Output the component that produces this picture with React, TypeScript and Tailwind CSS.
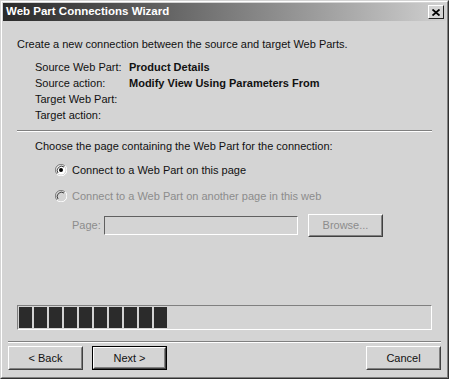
import React from "react";

const font = { fontFamily: '"Liberation Sans", Arial, sans-serif' };

function Radio({ checked, disabled }: { checked?: boolean; disabled?: boolean }) {
  return (
    <svg width="12" height="12" viewBox="0 0 12 12" className="shrink-0">
      <path d="M10 2 A5.5 5.5 0 0 0 2 10" fill="none" stroke="#808080" strokeWidth="1" />
      <path d="M10.2 1.8 A5.5 5.5 0 0 1 1.8 10.2" fill="none" stroke="#ffffff" strokeWidth="1" />
      <circle cx="6" cy="6" r="4.5" fill={disabled ? "#d4d4d4" : "#ffffff"} stroke="none" />
      <path d="M9 3 A4.3 4.3 0 0 0 3 9" fill="none" stroke="#404040" strokeWidth="1" />
      {checked && <circle cx="6" cy="6" r="2" fill="#000" />}
    </svg>
  );
}

function Button({ children, isDefault }: { children: React.ReactNode; isDefault?: boolean }) {
  const inner = (
    <div className="h-full w-full border border-t-white border-l-white border-r-[#404040] border-b-[#404040]">
      <div className="h-full w-full border border-t-[#d4d4d4] border-l-[#d4d4d4] border-r-[#808080] border-b-[#808080] flex items-center justify-center text-[11px] text-[#111]">
        {children}
      </div>
    </div>
  );
  if (isDefault) {
    return <div className="w-[75px] h-[24px] border border-black">{inner}</div>;
  }
  return <div className="w-[75px] h-[24px]">{inner}</div>;
}

export default function App() {
  return (
    <div style={font} className="w-[449px] h-[379px] bg-[#d4d4d4]">
      <div className="w-full h-full border border-t-[#d4d4d4] border-l-[#d4d4d4] border-r-[#303030] border-b-[#303030] flex flex-col">
        <div className="flex-1 border border-t-white border-l-white border-r-[#808080] border-b-[#808080] p-px flex flex-col">
          {/* Title bar */}
          <div className="h-[18px] flex items-center justify-between pl-[3px] pr-[2px] bg-gradient-to-r from-[#2a2a2a] via-[#7a7a7a] to-[#d0d0d0]">
            <span className="text-white font-bold text-[11.5px] leading-none">Web Part Connections Wizard</span>
            <div className="w-[16px] h-[14px] border border-t-white border-l-white border-r-[#202020] border-b-[#202020] bg-[#d4d4d4] flex items-center justify-center">
              <svg width="8" height="7" viewBox="0 0 8 7">
                <path d="M0.5 0.5 L7.5 6.5 M7.5 0.5 L0.5 6.5" stroke="#000" strokeWidth="1.8" />
              </svg>
            </div>
          </div>

          {/* Body */}
          <div className="flex-1 flex flex-col text-[11px] text-[#111]">
            <div className="pl-[14px] mt-[15px] leading-[16px] whitespace-nowrap">Create a new connection between the source and target Web Parts.</div>
            <div className="pl-[32px] mt-[7px] grid grid-cols-[94px_1fr] leading-[16px] whitespace-nowrap">
              <div>Source Web Part:</div>
              <div className="font-bold">Product Details</div>
              <div>Source action:</div>
              <div className="font-bold">Modify View Using Parameters From</div>
              <div>Target Web Part:</div>
              <div></div>
              <div>Target action:</div>
              <div></div>
            </div>
            <div className="ml-[14px] mr-[14px] mt-[7px] border-t border-t-[#808080] border-b border-b-white" />
            <div className="pl-[32px] mt-[6px] leading-[16px] whitespace-nowrap">Choose the page containing the Web Part for the connection:</div>
            <div className="pl-[52px] mt-[8px] flex items-center gap-[5px] leading-[16px] whitespace-nowrap">
              <Radio checked />
              <span>Connect to a Web Part on this page</span>
            </div>
            <div className="pl-[52px] mt-[10px] flex items-center gap-[5px] leading-[16px] text-[#8c8c8c] whitespace-nowrap">
              <Radio disabled />
              <span>Connect to a Web Part on another page in this web</span>
            </div>
            <div className="pl-[69px] mt-[10px] flex items-center h-[22px] text-[#8c8c8c]">
              <span className="w-[32px]">Page:</span>
              <div className="w-[194px] h-[19px] border border-t-[#606060] border-l-[#606060] border-r-white border-b-white" />
              <div className="ml-[10px] w-[75px] h-[23px] border border-t-white border-l-white border-r-[#404040] border-b-[#404040]">
                <div className="h-full w-full border border-t-[#d4d4d4] border-l-[#d4d4d4] border-r-[#808080] border-b-[#808080] flex items-center justify-center">
                  Browse...
                </div>
              </div>
            </div>

            {/* Progress */}
            <div className="ml-[14px] mr-[14px] mt-[69px] h-[25px] border border-t-[#808080] border-l-[#808080] border-r-white border-b-white flex items-stretch gap-[2px] pl-px pt-px pb-px">
              {Array.from({ length: 10 }).map((_, i) => (
                <div key={i} className="w-[13px] bg-[#2b2b2b]" />
              ))}
            </div>

            <div className="ml-[5px] mr-[5px] mt-[11px] border-t border-t-[#808080] border-b border-b-white" />
            <div className="mt-[3px] px-[5px] flex items-center">
              <Button>&lt; Back</Button>
              <div className="ml-[9px]">
                <Button isDefault>Next &gt;</Button>
              </div>
              <div className="ml-auto">
                <Button>Cancel</Button>
              </div>
            </div>
          </div>
        </div>
      </div>
    </div>
  );
}
